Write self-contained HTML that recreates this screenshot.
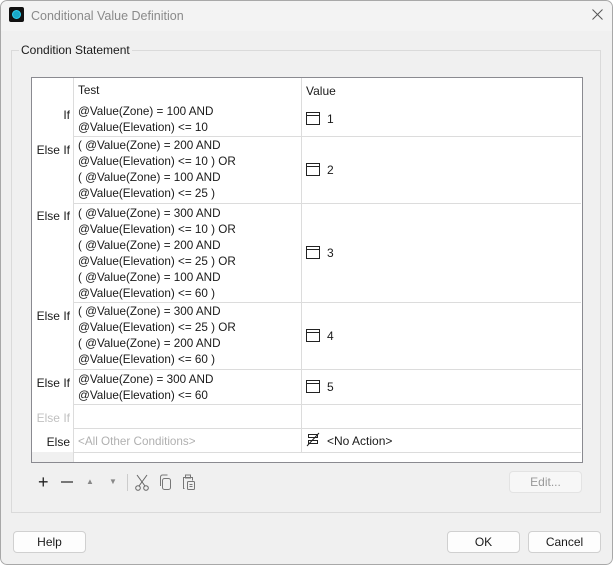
<!DOCTYPE html><html><head><style>
body{margin:0;width:614px;height:566px;background:#fff;font-family:"Liberation Sans",sans-serif;font-size:12px;color:#1a1a1a;position:relative;overflow:hidden}
.a{position:absolute}
.win{left:0;top:0;width:613px;height:565px;background:#f0f0f0;border-radius:7px;overflow:hidden}
.frame{left:0;top:0;width:611px;height:563px;border:1px solid #a8a8a8;border-radius:7px}
.tb{left:0;top:0;width:613px;height:31px;background:#f3f3f3}
.lbl{left:31px;width:39px;text-align:right;line-height:16px}
.t{left:78px;line-height:16px;white-space:pre;font-size:11.7px}
.hl{left:73px;width:508px;height:1px;background:#dcdcdc}
.ic{left:306px;width:12px;height:11px;border:1px solid #222;}
.ic:after{content:"";position:absolute;left:0;right:0;top:2px;height:1px;background:#222}
.v{left:327px}
.btn{height:20px;border:1px solid #d0d0d0;border-radius:4px;background:#fdfdfd;text-align:center;line-height:20px}
</style></head><body>
<div class="a win">
<div class="a tb"></div>
<div class="a" style="left:9px;top:7px;width:15px;height:15px;background:#111;border-radius:2px"><div class="a" style="left:3px;top:3px;width:7px;height:7px;border:1.5px solid #2fd0f0;border-radius:50%;background:#1aa8c8"></div></div>
<div class="a" style="left:31px;top:9px;font-size:12.5px;color:#8a8a8a">Conditional Value Definition</div>
<svg class="a" style="left:592px;top:9px" width="11" height="11"><g stroke="#555" stroke-width="1"><line x1="0.5" y1="0.5" x2="10.5" y2="10.5"/><line x1="10.5" y1="0.5" x2="0.5" y2="10.5"/></g></svg>
<div class="a" style="left:11px;top:50px;width:588px;height:461px;border:1px solid #dadada"></div>
<div class="a" style="left:19px;top:43px;background:#f0f0f0;padding:0 2px">Condition Statement</div>
<div class="a" style="left:31px;top:77px;width:550px;height:384px;border:1px solid #8a8a90;background:#fff"></div>
<div class="a" style="left:32px;top:452px;width:41px;height:10px;background:#f0f0f0"></div>
<div class="a" style="left:73px;top:78px;width:1px;height:384px;background:#dcdcdc"></div>
<div class="a" style="left:301px;top:78px;width:1px;height:374px;background:#dcdcdc"></div>
<div class="a t" style="top:83px">Test</div><div class="a" style="left:306px;top:84px">Value</div>
<div class="a hl" style="top:136px"></div><div class="a hl" style="top:203px"></div><div class="a hl" style="top:302px"></div><div class="a hl" style="top:369px"></div><div class="a hl" style="top:404px"></div><div class="a hl" style="top:428px"></div><div class="a hl" style="top:452px"></div>
<div class="a lbl" style="top:107px">If</div>
<div class="a t" style="top:104px">@Value(Zone) = 100 AND
@Value(Elevation) &lt;= 10</div>
<div class="a ic" style="top:112px"></div><div class="a v" style="top:112px">1</div>
<div class="a lbl" style="top:142px">Else If</div>
<div class="a t" style="top:138px">( @Value(Zone) = 200 AND
@Value(Elevation) &lt;= 10 ) OR
( @Value(Zone) = 100 AND
@Value(Elevation) &lt;= 25 )</div>
<div class="a ic" style="top:163px"></div><div class="a v" style="top:163px">2</div>
<div class="a lbl" style="top:208px">Else If</div>
<div class="a t" style="top:206px">( @Value(Zone) = 300 AND
@Value(Elevation) &lt;= 10 ) OR
( @Value(Zone) = 200 AND
@Value(Elevation) &lt;= 25 ) OR
( @Value(Zone) = 100 AND
@Value(Elevation) &lt;= 60 )</div>
<div class="a ic" style="top:246px"></div><div class="a v" style="top:246px">3</div>
<div class="a lbl" style="top:308px">Else If</div>
<div class="a t" style="top:304px">( @Value(Zone) = 300 AND
@Value(Elevation) &lt;= 25 ) OR
( @Value(Zone) = 200 AND
@Value(Elevation) &lt;= 60 )</div>
<div class="a ic" style="top:329px"></div><div class="a v" style="top:329px">4</div>
<div class="a lbl" style="top:375px">Else If</div>
<div class="a t" style="top:372px">@Value(Zone) = 300 AND
@Value(Elevation) &lt;= 60</div>
<div class="a ic" style="top:380px"></div><div class="a v" style="top:380px">5</div>
<div class="a lbl" style="top:410px;color:#c0c0c0">Else If</div>
<div class="a lbl" style="top:434px">Else</div>
<div class="a t" style="top:434px;color:#b0b0b0">&lt;All Other Conditions&gt;</div>
<svg class="a" style="left:306px;top:432px" width="14" height="15"><g stroke="#222" fill="none"><rect x="2.5" y="2.5" width="9" height="3"/><rect x="2.5" y="8.5" width="9" height="3"/><line x1="1" y1="14" x2="13" y2="1"/></g></svg>
<div class="a v" style="top:434px">&lt;No Action&gt;</div>
<div class="a" style="left:38px;top:472px;font-size:18px;color:#222">+</div>
<div class="a" style="left:61px;top:481px;width:12px;height:2px;background:#777"></div>
<div class="a" style="left:86px;top:477px;font-size:8px;color:#888">▲</div>
<div class="a" style="left:109px;top:477px;font-size:8px;color:#888">▼</div>
<div class="a" style="left:127px;top:474px;width:1px;height:17px;background:#ccc"></div>
<svg class="a" style="left:134px;top:474px" width="16" height="17"><g stroke="#666" fill="none"><line x1="3" y1="1" x2="11" y2="12"/><line x1="13" y1="1" x2="5" y2="12"/><circle cx="4" cy="14" r="2.3"/><circle cx="12" cy="14" r="2.3"/></g></svg>
<svg class="a" style="left:158px;top:474px" width="15" height="17"><g stroke="#777" fill="none"><rect x="4.5" y="4.5" width="8" height="11" rx="2"/><path d="M2.5 12V3a2 2 0 0 1 2-2h5"/></g></svg>
<svg class="a" style="left:181px;top:474px" width="15" height="17"><g stroke="#777" fill="none"><path d="M3.5 14.5h-1v-11h9v3"/><rect x="4.5" y="1" width="5" height="3"/><rect x="6.5" y="7.5" width="7" height="8" rx="1"/><line x1="8.5" y1="10.5" x2="11.5" y2="10.5"/><line x1="8.5" y1="12.5" x2="11.5" y2="12.5"/></g></svg>
<div class="a btn" style="left:509px;top:471px;width:71px;color:#999;background:#f7f7f7;border-color:#e3e3e3">Edit...</div>
<div class="a btn" style="left:13px;top:531px;width:71px">Help</div>
<div class="a btn" style="left:447px;top:531px;width:71px">OK</div>
<div class="a btn" style="left:528px;top:531px;width:71px">Cancel</div>
<div class="a frame"></div>
</div>
</body></html>
